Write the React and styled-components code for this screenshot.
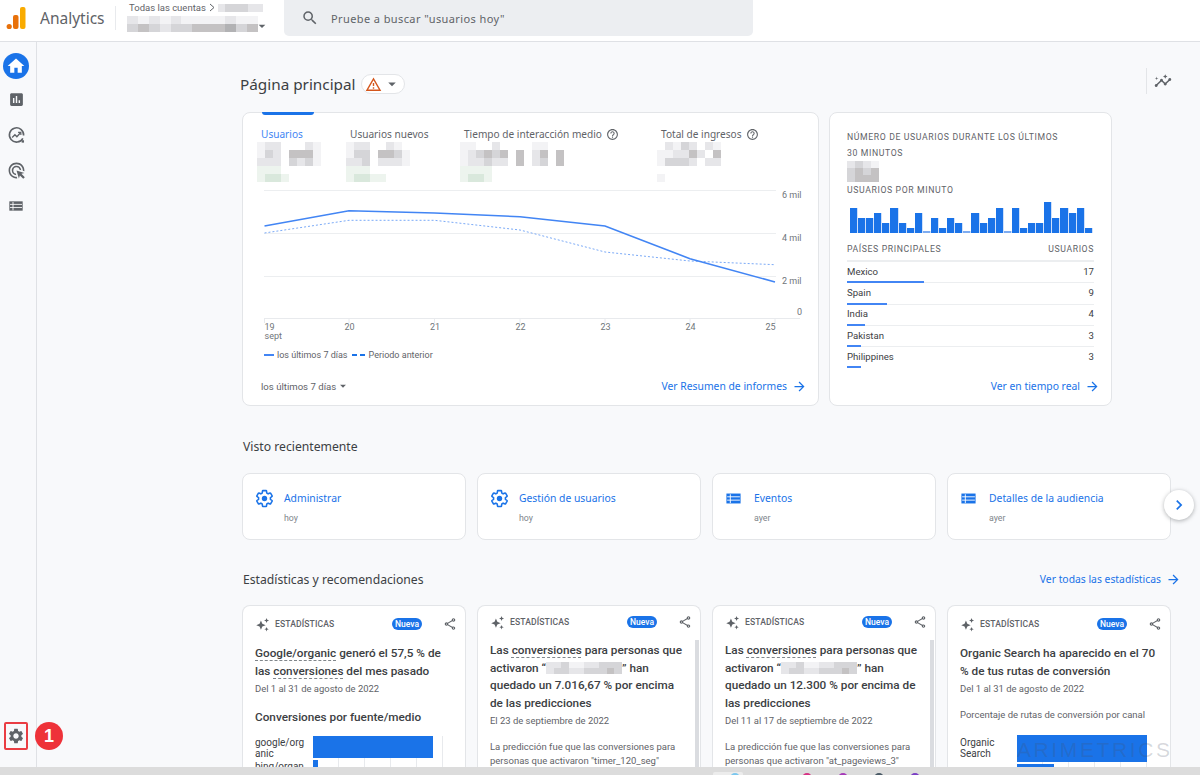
import styled, { createGlobalStyle } from 'styled-components';
import {
  MdHome, MdAssessment, MdAdsClick, MdSettings, MdSearch, MdArrowDropDown, MdOutlineWarningAmber,
  MdArrowForward, MdChevronRight, MdOutlineHelpOutline, MdInsights, MdOutlineShare,
} from 'react-icons/md';

const GlobalStyle = createGlobalStyle`
  html, body { margin: 0; padding: 0; height: 100%; background: #f8f9fb; }
  * { box-sizing: border-box; }
  body { font-family: Roboto, "Liberation Sans", sans-serif; color: #3c4043; }
`;

const GOOGLE = `"Noto Sans", Roboto, sans-serif`;
const BLUE = '#1a73e8';

const shades = {
  1: '#f3f3f5', 2: '#e6e6e9', 3: '#d5d5d8', 4: '#c4c2c3', 5: '#b2b2b4',
  g: '#edf4ee', h: '#d9e8dc', k: '#f7f8f8', b: '#eef3f7',
};

const Grid = styled.span`
  display: ${p => (p.$inline ? 'inline-grid' : 'grid')};
  grid-template-columns: repeat(${p => p.$cols}, ${p => p.$w}px);
  grid-auto-rows: ${p => p.$h}px;
  filter: blur(0.6px);
  vertical-align: middle;
  margin-left: ${p => p.$shift || 0}px;
`;

const Cell = styled.i.attrs(p => ({ style: { background: p.$c } }))`
  display: block;
`;

function Mosaic({ rows, w = 8, h = 8, inline, shift }) {
  return (
    <Grid $cols={rows[0].length} $w={w} $h={h} $inline={inline} $shift={shift}>
      {rows.join('').split('').map((ch, i) => (
        <Cell key={i} $c={shades[ch] || 'transparent'} />
      ))}
    </Grid>
  );
}

const Page = styled.div`
  position: relative;
  width: 1200px;
  height: 775px;
  overflow: hidden;
  display: flex;
  flex-direction: column;
`;

const Header = styled.header`
  height: 42px;
  flex: none;
  background: #fff;
  border-bottom: 1px solid #dfe1e5;
  display: flex;
  align-items: flex-start;
  padding-left: 6px;
`;

const Brand = styled.div`
  font: 400 15.5px ${GOOGLE};
  color: #5f6368;
  margin: 7px 0 0 14px;
  width: 75px;
`;

const HeadDivider = styled.div`
  width: 1px;
  height: 24px;
  background: #e8eaed;
  margin-top: 6px;
`;

const Account = styled.div`
  margin-left: 11px;
  width: 157px;
  padding-top: 3px;
`;

const AccountTop = styled.div`
  display: flex;
  align-items: center;
  height: 9px;
  font-size: 9.5px;
  color: #5f6368;
  padding-left: 2px;
  gap: 3px;
`;

const AccountBottom = styled.div`
  display: flex;
  align-items: center;
  margin-top: 1px;
  color: #5f6368;
  font-size: 14px;
  & > svg { margin: 5px 0 0 -4px; }
`;

const Search = styled.div`
  width: 469px;
  height: 36px;
  background: #eceef1;
  border-radius: 0 0 5px 5px;
  display: flex;
  align-items: center;
  padding-left: 17px;
  gap: 12px;
  color: #5f6368;
  font: 400 11px ${GOOGLE};
  letter-spacing: 0.4px;
  & > svg { color: #5f6368; }
`;

const Body = styled.div`
  flex: 1;
  min-height: 0;
  display: flex;
`;

const Sidebar = styled.nav`
  position: relative;
  width: 37px;
  flex: none;
  border-right: 1px solid #dfe1e5;
  display: flex;
  flex-direction: column;
  align-items: center;
  padding: 11px 4px 0 0;
  color: #5f6368;
`;

const HomeButton = styled.div`
  width: 26px;
  height: 26px;
  border-radius: 50%;
  background: ${BLUE};
  color: #fff;
  display: flex;
  align-items: center;
  justify-content: center;
  margin-bottom: 3px;
`;

const NavIcon = styled.div`
  height: 35.5px;
  display: flex;
  align-items: center;
  justify-content: center;
`;

const GearBox = styled.div`
  margin-top: auto;
  margin-bottom: 17px;
  width: 24px;
  height: 28px;
  flex: none;
  border: 2px solid #ea3d43;
  border-radius: 2px;
  display: flex;
  align-items: center;
  justify-content: center;
`;

const Badge = styled.div`
  position: absolute;
  left: 35px;
  bottom: 17px;
  width: 28px;
  height: 28px;
  border-radius: 50%;
  background: #ee3239;
  color: #fff;
  display: flex;
  align-items: center;
  justify-content: center;
  font: 700 18px "Liberation Sans", sans-serif;
  z-index: 2;
`;

const Main = styled.main`
  flex: 1;
  min-width: 0;
  overflow: hidden;
  padding: 28px 0 0 205px;
`;

const TitleRow = styled.div`
  position: relative;
  width: 930px;
  height: 28px;
  display: flex;
  align-items: center;
  margin-bottom: 14px;
`;

const PageTitle = styled.h1`
  margin: 0 0 0 -2px;
  font: 400 15.3px ${GOOGLE};
  color: #3c4043;
  width: 121px;
`;

const Chip = styled.div`
  width: 44px;
  height: 20px;
  border: 1px solid #e3e5e8;
  border-radius: 10px;
  display: flex;
  align-items: center;
  padding-left: 3px;
  background: #fff;
  & > svg:first-child { color: #d4561c; }
  & > svg:last-child { color: #5f6368; margin-left: 1px; }
`;

const ToolSlot = styled.div`
  position: absolute;
  left: 904px;
  top: -2px;
  height: 26px;
  border-left: 1px solid #e3e5e8;
  padding-left: 7px;
  display: flex;
  align-items: center;
  color: #5f6368;
`;

const TopRow = styled.section`
  display: flex;
  gap: 10px;
`;

const Card = styled.div`
  position: relative;
  background: #fff;
  border: 1px solid #e3e5e8;
  border-radius: 8px;
`;

const OverviewCard = styled(Card)`
  width: 577px;
  height: 294px;
  padding: 0 11px 0 18px;
`;

const TabMark = styled.div`
  position: absolute;
  left: 19px;
  top: -1px;
  width: 52px;
  height: 3px;
  background: ${BLUE};
  border-radius: 0 0 3px 3px;
`;

const Tabs = styled.div`
  display: flex;
  padding-top: 14px;
  height: 77px;
`;

const Tab = styled.div`
  width: ${p => p.$w}px;
  margin-left: -1px;
`;

const TabLabel = styled.div`
  display: flex;
  align-items: center;
  gap: 4px;
  height: 14px;
  font: 400 10.1px ${GOOGLE};
  color: ${p => (p.$active ? '#4285f4' : '#5f6368')};
  margin-bottom: 1px;
  padding-left: 1px;
  white-space: nowrap;
  & > svg { color: #5f6368; }
`;

const ChartSvg = styled.svg`
  display: block;
  margin-left: -18px;
  text {
    font: 400 9px Roboto, sans-serif;
    fill: #70757a;
  }
`;

const Legend = styled.div`
  display: flex;
  align-items: center;
  margin: 4px 0 0 3px;
  height: 12px;
  font-size: 9px;
  color: #5f6368;
`;

const LegendSolid = styled.i`
  width: 10px;
  height: 2px;
  background: #4285f4;
  margin-right: 3px;
`;

const LegendDash = styled.i`
  width: 13px;
  height: 2px;
  margin: 0 4px 0 4px;
  background: repeating-linear-gradient(90deg, ${BLUE} 0 5px, transparent 5px 8px);
`;

const CardFoot = styled.div`
  display: flex;
  align-items: center;
  justify-content: space-between;
  height: 20px;
  margin-top: 15px;
`;

const RangeSelect = styled.div`
  display: flex;
  align-items: center;
  font-size: 9.6px;
  color: #5f6368;
`;

const Link = styled.a`
  display: inline-flex;
  align-items: center;
  gap: 5px;
  color: ${BLUE};
  font: 400 10.35px ${GOOGLE};
  white-space: nowrap;
`;

const RealtimeCard = styled(Card)`
  width: 283px;
  height: 294px;
  padding: 16px 13px 0 17px;
`;

const Overline = styled.div`
  font-size: 8.7px;
  font-weight: 400;
  letter-spacing: 0.62px;
  color: #5f6368;
  line-height: 16px;
  white-space: nowrap;
`;

const MiniBars = styled.div`
  display: flex;
  align-items: flex-end;
  height: 32px;
  margin: 3px 0 0 3px;
`;

const MiniBar = styled.i`
  display: block;
  width: 8.1px;
  height: ${p => p.$h}px;
  background: ${p => (p.$h < 3 ? '#7dabf0' : BLUE)};
  border-right: 0.6px solid #cfe0fa;
`;

const TableHead = styled.div`
  display: flex;
  justify-content: space-between;
  margin-top: 8px;
  width: 247px;
  border-bottom: 2px solid #eceef0;
  height: 21px;
`;

const CountryRow = styled.div`
  position: relative;
  width: 247px;
  height: 21.3px;
  display: flex;
  justify-content: space-between;
  align-items: center;
  padding-bottom: 2px;
  font-size: 9.6px;
  color: #3c4043;
  border-bottom: 1px solid ${p => (p.$last ? 'transparent' : '#eceef0')};
`;

const CountryBar = styled.i`
  position: absolute;
  left: 0;
  bottom: -1px;
  width: ${p => p.$w}px;
  height: 2px;
  background: #4285f4;
`;

const RealtimeFoot = styled.div`
  position: absolute;
  right: 11px;
  bottom: 11px;
`;

const SectionHead = styled.div`
  width: 939px;
  display: flex;
  align-items: center;
  justify-content: space-between;
  height: 20px;
  margin: ${p => p.$top}px 0 ${p => p.$bottom}px;
`;

const SectionTitle = styled.h2`
  margin: 0 0 0 1px;
  font: 400 12.2px ${GOOGLE};
  color: #3c4043;
`;

const RecentRow = styled.div`
  position: relative;
  display: flex;
  gap: 11px;
`;

const RecentCard = styled(Card)`
  width: 224px;
  height: 67px;
  padding: 15px 12px;
  display: flex;
  gap: 10px;
`;

const RecentIcon = styled.div`
  width: 19px;
  flex: none;
  height: 18px;
  display: flex;
  align-items: center;
`;

const RecentTitle = styled.div`
  font: 400 10.35px ${GOOGLE};
  color: ${BLUE};
  line-height: 18px;
`;

const RecentWhen = styled.div`
  font-size: 8.8px;
  color: #80868b;
  margin-top: 6px;
`;

const NextButton = styled.div`
  position: absolute;
  left: 922px;
  top: 17px;
  width: 30px;
  height: 30px;
  border-radius: 50%;
  background: #fff;
  box-shadow: 0 1px 4px rgba(60, 64, 67, 0.4);
  color: ${BLUE};
  display: flex;
  align-items: center;
  justify-content: center;
`;

const InsightRow = styled.div`
  display: flex;
  gap: 11px;
`;

const InsightCard = styled(Card)`
  width: 224px;
  height: 180px;
  overflow: hidden;
  border-bottom: 0;
  padding: ${p => (p.$scrolled ? 9 : 11)}px 13px 0 12px;
`;

const InsightHead = styled.div`
  display: flex;
  align-items: center;
  height: 14px;
  color: #5f6368;
  margin-bottom: ${p => (p.$scrolled ? 13 : 14)}px;
  & > svg { flex: none; }
`;

const InsightKind = styled.span`
  flex: none;
  font-size: 8.6px;
  font-weight: 500;
  letter-spacing: 0.1px;
  margin-left: 5px;
  width: 117px;
`;

const NewPill = styled.span`
  flex: none;
  width: 30px;
  height: 12px;
  border-radius: 6px;
  background: ${BLUE};
  color: #fff;
  font-size: 8.5px;
  font-weight: 500;
  display: flex;
  align-items: center;
  justify-content: center;
  margin-right: 21px;
`;

const InsightTitle = styled.div`
  font-size: 11.75px;
  font-weight: 500;
  line-height: 17.5px;
  color: #3c4043;
`;

const Dashed = styled.span`
  text-decoration: underline dashed #80868b 1px;
  text-underline-offset: 3px;
`;

const InsightDate = styled.div`
  font-size: 9.45px;
  color: #5f6368;
  margin-top: 3px;
`;

const InsightText = styled.div`
  font-size: 9.5px;
  line-height: 14.3px;
  color: #5f6368;
  margin-top: 14px;
`;

const Subhead = styled.div`
  font-size: 11.75px;
  font-weight: 500;
  color: #3c4043;
  margin-top: 16px;
`;

const SubheadPlain = styled.div`
  font-size: 9.5px;
  color: #5f6368;
  margin-top: 15px;
`;

const BarRow = styled.div`
  display: flex;
  margin-top: ${p => p.$top}px;
`;

const BarLabels = styled.div`
  width: ${p => p.$w}px;
  flex: none;
  font-size: 10px;
  line-height: 10.5px;
  color: #3c4043;
`;

const BarLabel = styled.div`
  height: ${p => p.$h}px;
  padding-top: ${p => p.$pad}px;
  word-break: break-all;
  overflow: hidden;
  white-space: pre-line;
`;

const Plot = styled.div`
  width: 131px;
  height: 60px;
  background: repeating-linear-gradient(90deg, transparent 0 25px, #e8eaed 25px 26px);
`;

const HBar = styled.div`
  width: ${p => p.$w}px;
  height: ${p => p.$h}px;
  background: ${BLUE};
  margin-bottom: 2px;
`;

const Scrollbar = styled.i`
  position: absolute;
  right: 1px;
  top: 34px;
  bottom: 0;
  width: 4px;
  background: #dadce0;
`;

const Watermark = styled.div`
  position: absolute;
  left: 1017px;
  top: 738px;
  font: 400 21px "Liberation Sans", sans-serif;
  letter-spacing: 2.6px;
  color: rgba(70, 80, 100, 0.22);
  pointer-events: none;
`;

const Taskbar = styled.footer`
  position: relative;
  height: 8px;
  flex: none;
  background: #dcdcdc;
  overflow: hidden;
  display: flex;
  padding-left: 730px;
  gap: 26px;
  &::before {
    content: '';
    position: absolute;
    left: 713px;
    top: 5px;
    width: 30px;
    height: 6px;
    border-radius: 2px;
    background: #ececec;
  }
`;

const TrayDot = styled.i`
  position: relative;
  width: 10px;
  height: 10px;
  border-radius: 50%;
  background: ${p => p.$c};
  margin-top: 6px;
  margin-right: ${p => p.$gap || 0}px;
`;

const TableIcon = ({ color = '#5f6368', size = 16 }) => (
  <svg width={size} height={size} viewBox="0 0 24 24" style={{ flex: 'none' }}>
    <rect x="2" y="5" width="20" height="14" fill={color} />
    <path d="M3 9.6h18M3 14.3h18M7.5 6v12.5" stroke="#fff" strokeWidth="1.3" fill="none" />
  </svg>
);

const GearIcon = () => (
  <svg width="19" height="19" viewBox="0 0 24 24" style={{ flex: 'none' }}>
    <path
      d="M19.43 12.98c.04-.32.07-.64.07-.98 0-.34-.03-.66-.07-.98l2.11-1.65c.19-.15.24-.42.12-.64l-2-3.46c-.09-.16-.26-.25-.44-.25-.06 0-.12.01-.17.03l-2.49 1c-.52-.4-1.08-.73-1.69-.98l-.38-2.65C14.46 2.18 14.25 2 14 2h-4c-.25 0-.46.18-.49.42l-.38 2.65c-.61.25-1.17.59-1.69.98l-2.49-1c-.06-.02-.12-.03-.18-.03-.17 0-.34.09-.43.25l-2 3.46c-.13.22-.07.49.12.64l2.11 1.65c-.04.32-.07.65-.07.98 0 .33.03.66.07.98l-2.11 1.65c-.19.15-.24.42-.12.64l2 3.46c.09.16.26.25.44.25.06 0 .12-.01.17-.03l2.49-1c.52.4 1.08.73 1.69.98l.38 2.65c.03.24.24.42.49.42h4c.25 0 .46-.18.49-.42l.38-2.65c.61-.25 1.17-.59 1.69-.98l2.49 1c.06.02.12.03.18.03.17 0 .34-.09.43-.25l2-3.46c.12-.22.07-.49-.12-.64l-2.11-1.65z"
      fill="none"
      stroke={BLUE}
      strokeWidth="2"
    />
    <circle cx="12" cy="12" r="3.4" fill={BLUE} />
  </svg>
);

const ExploreIcon = () => (
  <svg width="19" height="19" viewBox="0 0 24 24" fill="none" stroke="#5f6368">
    <path d="M20 15.5A9 9 0 1 1 21 12" strokeWidth="2" />
    <path d="M6.5 14.5l3.5-3.5 2.5 2.5 4.5-5" strokeWidth="1.7" />
    <path d="M14 8h3.5v3.5" strokeWidth="1.5" />
    <rect x="18.5" y="18" width="3" height="3" fill="#5f6368" stroke="none" />
  </svg>
);

const Sparkle = () => (
  <svg width="15" height="15" viewBox="0 0 24 24" fill="#5f6368">
    <path d="M9.5 5.5l2.2 5.3L17 13l-5.300 2.200L9.500 20.500l-2.200-5.300L2 13l5.300-2.200z" />
    <path d="M18.500 1.500l1.100 2.900 2.900 1.100-2.900 1.100-1.100 2.900-1.100-2.900-2.900-1.100 2.900-1.100z" />
    <path d="M18.500 16l1 2.500 2.500 1-2.500 1-1 2.500-1-2.500-2.500-1 2.500-1z" />
  </svg>
);

const LogoMark = () => (
  <svg width="20" height="24" viewBox="0 0 20 24" style={{ marginTop: 6, flex: 'none' }}>
    <rect x="14" y="1" width="5.500" height="22" rx="2" fill="#f9ab00" />
    <rect x="7" y="9" width="5.500" height="14" rx="2" fill="#e8710a" />
    <circle cx="3.200" cy="20.500" r="2.600" fill="#e8710a" />
  </svg>
);

const solid = '264.5,225 349,209.7 434.5,212 520,215.7 605,225 690,257.7 775,281';
const dashed = '264.5,232 349,219.3 434.5,219.3 520,229 605,251 690,260 775,263.7';
const days = [19, 20, 21, 22, 23, 24, 25];
const xs = [264.5, 349, 434.5, 520, 605, 690, 775];

function TrafficChart() {
  // viewBox follows page x so that points can be read straight off the design
  return (
    <ChartSvg width="572" height="155" viewBox="243 189 572 155">
      {[189.5, 232.5, 275.5].map(y => (
        <line key={y} x1="264" x2="776" y1={y} y2={y} stroke="#eceef0" />
      ))}
      <line x1="264" x2="800" y1="317.500" y2="317.500" stroke="#e8eaed" />
      {xs.map(x => (
        <line key={x} x1={x} x2={x} y1="317" y2="322" stroke="#e8eaed" />
      ))}
      <polyline points={dashed} fill="none" stroke="#7baaf7" strokeWidth="1" strokeDasharray="2 2" />
      <polyline points={solid} fill="none" stroke="#4285f4" strokeWidth="1.6" />
      <text x="782" y="197">6 mil</text>
      <text x="782" y="240">4 mil</text>
      <text x="782" y="283">2 mil</text>
      <text x="797" y="314">0</text>
      {days.map((d, i) => (
        <text
          key={d}
          x={i === 0 ? 264.5 : i === 6 ? 775.5 : xs[i] + 0.5}
          y="329"
          textAnchor={i === 0 ? 'start' : i === 6 ? 'end' : 'middle'}
        >
          {d}
        </text>
      ))}
      <text x="264.500" y="338">sept</text>
    </ChartSvg>
  );
}

const barHeights = [25, 15, 15, 20, 10, 25, 10, 5, 20, 2, 15, 5, 15, 10, 2, 20, 10, 15, 25, 2, 25, 5, 10, 10, 31, 15, 25, 20, 25, 5];

const countries = [
  ['Mexico', 17, 77],
  ['Spain', 9, 40],
  ['India', 4, 18],
  ['Pakistan', 3, 14],
  ['Philippines', 3, 14],
];

const recents = [
  ['Administrar', 'hoy', 'gear'],
  ['Gestión de usuarios', 'hoy', 'gear'],
  ['Eventos', 'ayer', 'table'],
  ['Detalles de la audiencia', 'ayer', 'table'],
];

function InsightHeader({ scrolled }) {
  return (
    <InsightHead $scrolled={scrolled}>
      <Sparkle />
      <InsightKind>ESTADÍSTICAS</InsightKind>
      <NewPill>Nueva</NewPill>
      <MdOutlineShare size={14} />
    </InsightHead>
  );
}

export default function App() {
  return (
    <Page>
      <GlobalStyle />
      <Header>
        <LogoMark />
        <Brand>Analytics</Brand>
        <HeadDivider />
        <Account>
          <AccountTop>
            Todas las cuentas
            <svg width="6" height="9" viewBox="0 0 6 9" fill="none" stroke="#5f6368"><path d="M1 1l4 3.500L1 8" /></svg>
            <Mosaic rows={['233322']} w={7.500} h={8} inline />
          </AccountTop>
          <AccountBottom>
            <Mosaic
              rows={['212121111211', '343233444534']}
              w={10.900}
              h={8}
            />
            <MdArrowDropDown size={16} />
          </AccountBottom>
        </Account>
        <Search>
          <MdSearch size={18} />
          Pruebe a buscar "usuarios hoy"
        </Search>
      </Header>

      <Body>
        <Sidebar>
          <HomeButton><MdHome size={20} /></HomeButton>
          <NavIcon><MdAssessment size={17} /></NavIcon>
          <NavIcon><ExploreIcon /></NavIcon>
          <NavIcon><MdAdsClick size={19} /></NavIcon>
          <NavIcon><TableIcon /></NavIcon>
          <GearBox><MdSettings size={18} /></GearBox>
          <Badge>1</Badge>
        </Sidebar>

        <Main>
          <TitleRow>
            <PageTitle>Página principal</PageTitle>
            <Chip>
              <MdOutlineWarningAmber size={17} />
              <MdArrowDropDown size={18} />
            </Chip>
            <ToolSlot><MdInsights size={18} /></ToolSlot>
          </TitleRow>

          <TopRow>
            <OverviewCard>
              <TabMark />
              <Tabs>
                <Tab $w={90}>
                  <TabLabel $active>Usuarios</TabLabel>
                  <Mosaic shift={-3} rows={['12200021', '13204441', '22203231', 'ggg00000', 'ghhg0000']} />
                </Tab>
                <Tab $w={115}>
                  <TabLabel>Usuarios nuevos</TabLabel>
                  <Mosaic shift={-3} rows={['12200210', '13304431', '22302221', 'ggg00000', 'ghhgg000']} />
                </Tab>
                <Tab $w={198}>
                  <TabLabel>Tiempo de interacción medio <MdOutlineHelpOutline size={13} /></TabLabel>
                  <Mosaic shift={-3} rows={['1100200001100', '1234340402404', '1223220402304', 'gggg000000000', 'ghhg000000000']} />
                </Tab>
                <Tab $w={120}>
                  <TabLabel>Total de ingresos <MdOutlineHelpOutline size={13} /></TabLabel>
                  <Mosaic shift={-3} rows={['021320210', '112242040', '133320220', '000000000', '100000000']} />
                </Tab>
              </Tabs>
              <TrafficChart />
              <Legend>
                <LegendSolid />
                los últimos 7 días
                <LegendDash />
                Periodo anterior
              </Legend>
              <CardFoot>
                <RangeSelect>los últimos 7 días<MdArrowDropDown size={14} /></RangeSelect>
                <Link>Ver Resumen de informes <MdArrowForward size={15} /></Link>
              </CardFoot>
            </OverviewCard>

            <RealtimeCard>
              <Overline>NÚMERO DE USUARIOS DURANTE LOS ÚLTIMOS</Overline>
              <Overline>30 MINUTOS</Overline>
              <Mosaic rows={['2321', '3434', '3444']} w={8} h={7} />
              <Overline>USUARIOS POR MINUTO</Overline>
              <MiniBars>
                {barHeights.map((h, i) => <MiniBar key={i} $h={h} />)}
              </MiniBars>
              <TableHead>
                <Overline>PAÍSES PRINCIPALES</Overline>
                <Overline>USUARIOS</Overline>
              </TableHead>
              {countries.map(([name, value, w], i) => (
                <CountryRow key={name} $last={i === countries.length - 1}>
                  <span>{name}</span>
                  <span>{value}</span>
                  <CountryBar $w={w} />
                </CountryRow>
              ))}
              <RealtimeFoot>
                <Link>Ver en tiempo real <MdArrowForward size={15} /></Link>
              </RealtimeFoot>
            </RealtimeCard>
          </TopRow>

          <SectionHead $top={30} $bottom={17}>
            <SectionTitle>Visto recientemente</SectionTitle>
          </SectionHead>
          <RecentRow>
            {recents.map(([title, when, icon]) => (
              <RecentCard key={title}>
                <RecentIcon>
                  {icon === 'gear' ? <GearIcon /> : <TableIcon color={BLUE} size={17} />}
                </RecentIcon>
                <div>
                  <RecentTitle>{title}</RecentTitle>
                  <RecentWhen>{when}</RecentWhen>
                </div>
              </RecentCard>
            ))}
            <NextButton><MdChevronRight size={20} /></NextButton>
          </RecentRow>

          <SectionHead $top={29} $bottom={16}>
            <SectionTitle>Estadísticas y recomendaciones</SectionTitle>
            <Link>Ver todas las estadísticas <MdArrowForward size={15} /></Link>
          </SectionHead>
          <InsightRow>
            <InsightCard>
              <InsightHeader />
              <InsightTitle>
                <Dashed>Google/organic</Dashed> generó el 57,5 % de las <Dashed>conversiones</Dashed> del mes pasado
              </InsightTitle>
              <InsightDate>Del 1 al 31 de agosto de 2022</InsightDate>
              <Subhead>Conversiones por fuente/medio</Subhead>
              <BarRow $top={12}>
                <BarLabels $w={58}>
                  <BarLabel $h={24} $pad={2}>{'google/org\nanic'}</BarLabel>
                  <BarLabel $h={20} $pad={2}>{'bing/organ\nic'}</BarLabel>
                </BarLabels>
                <Plot>
                  <HBar $w={120} $h={22} />
                  <HBar $w={5} $h={8} />
                </Plot>
              </BarRow>
            </InsightCard>

            <InsightCard $scrolled>
              <InsightHeader scrolled />
              <InsightTitle>
                Las <Dashed>conversiones</Dashed> para personas que activaron “<Mosaic rows={['2231122333', '2332233343']} w={7.600} h={6} inline />” han quedado un 7.016,67 % por encima de las predicciones
              </InsightTitle>
              <InsightDate>El 23 de septiembre de 2022</InsightDate>
              <InsightText>
                La predicción fue que las conversiones para personas que activaron "timer_120_seg"
              </InsightText>
              <Scrollbar />
            </InsightCard>

            <InsightCard $scrolled>
              <InsightHeader scrolled />
              <InsightTitle>
                Las <Dashed>conversiones</Dashed> para personas que activaron “<Mosaic rows={['2231122333', '2332233343']} w={7.600} h={6} inline />” han quedado un 12.300 % por encima de las predicciones
              </InsightTitle>
              <InsightDate>Del 11 al 17 de septiembre de 2022</InsightDate>
              <InsightText>
                La predicción fue que las conversiones para personas que activaron "at_pageviews_3"
              </InsightText>
              <Scrollbar />
            </InsightCard>

            <InsightCard>
              <InsightHeader />
              <InsightTitle>
                Organic Search ha aparecido en el 70 % de tus rutas de conversión
              </InsightTitle>
              <InsightDate>Del 1 al 31 de agosto de 2022</InsightDate>
              <SubheadPlain>Porcentaje de rutas de conversión por canal</SubheadPlain>
              <BarRow $top={15}>
                <BarLabels $w={57}>
                  <BarLabel $h={26} $pad={3}>{'Organic\nSearch'}</BarLabel>
                </BarLabels>
                <Plot>
                  <HBar $w={130} $h={27} />
                  <HBar $w={37} $h={8} />
                </Plot>
              </BarRow>
            </InsightCard>
          </InsightRow>
        </Main>
      </Body>

      <Taskbar>
        <TrayDot $c="#7cc7ee" $gap={36} />
        <TrayDot $c="#d63384" />
        <TrayDot $c="#a63bb8" />
        <TrayDot $c="#4a5a66" />
        <TrayDot $c="#7b3fc4" />
      </Taskbar>
      <Watermark>ARIMETRICS</Watermark>
    </Page>
  );
}
